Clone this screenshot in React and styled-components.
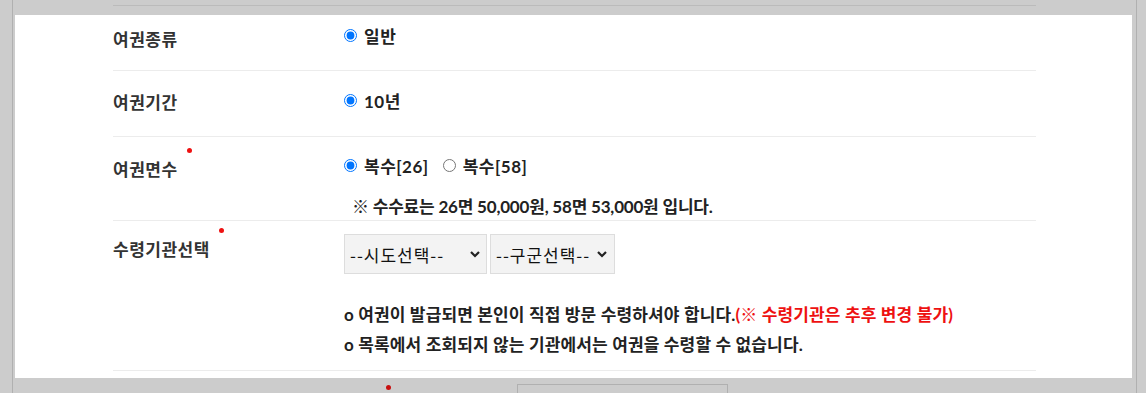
import styled, { createGlobalStyle } from "styled-components";

const GlobalStyle = createGlobalStyle`
  html, body {
    margin: 0;
    padding: 0;
    background: #cccccc;
    overflow: hidden;
  }
`;

const Screen = styled.div`
  width: 1146px;
  height: 393px;
  overflow: hidden;
  background: #cccccc;
  font-family: Lato, "Noto Sans CJK KR", sans-serif;
`;

const Frame = styled.div`
  margin-left: 12px;
  width: 1123px;
  height: 393px;
  border-left: 1px solid #b0b0b0;
  border-right: 1px solid #b0b0b0;
  display: flex;
  flex-direction: column;
`;

const DimTop = styled.div`
  flex: none;
  height: 15px;
  padding-left: 100px;
  box-sizing: border-box;
  padding-top: 5px;
`;

const DimLine = styled.div`
  width: 923px;
  height: 1px;
  background: #bbbbbb;
`;

const Panel = styled.div`
  flex: none;
  margin: 0 4px 0 2px;
  height: 363px;
  background: #ffffff;
  padding-left: 98px;
`;

const Row = styled.div`
  width: 923px;
  display: flex;
  border-bottom: 1px solid #ececec;
`;

const Label = styled.div`
  width: 231px;
  flex: none;
  padding-top: ${(p) => p.$top}px;
  font-size: 17px;
  font-weight: 700;
  line-height: 24px;
  letter-spacing: 0.5px;
  color: #333333;
`;

const LabelText = styled.span`
  position: relative;
  display: inline-block;

  ${(p) =>
    p.$required &&
    `
    &::after {
      content: "";
      position: absolute;
      top: -10px;
      right: -14px;
      width: 5px;
      height: 5px;
      border-radius: 50%;
      background: #ee1111;
    }
  `}
`;

const Value = styled.div`
  flex: 1;
  padding-top: ${(p) => p.$top}px;
  padding-bottom: ${(p) => p.$bottom}px;
  color: #222222;
`;

const RadioGroup = styled.div`
  display: flex;
  align-items: center;
  height: 22px;
  font-size: 17px;
  font-weight: 700;
  letter-spacing: 0.5px;
`;

const RadioLabel = styled.label`
  display: inline-flex;
  align-items: center;
  margin-right: 14px;

  input {
    width: 13px;
    height: 13px;
    margin: 0 7px 0 0;
  }
`;

const Note = styled.p`
  margin: 20px 0 0 8px;
  font-size: 17px;
  font-weight: 700;
  line-height: 22px;
  letter-spacing: -0.2px;
`;

const Selects = styled.div`
  display: flex;
  gap: 3px;
`;

const SelectWrap = styled.div`
  position: relative;
  width: ${(p) => p.$w}px;
  height: 40px;
`;

const Select = styled.select`
  appearance: none;
  width: 100%;
  height: 100%;
  border: 1px solid #dddddd;
  background: #f3f3f3;
  padding: 0 0 0 5px;
  font-family: "Noto Sans CJK KR", sans-serif;
  font-size: 17px;
  letter-spacing: 1px;
  color: #111111;
  outline: none;
`;

const Chevron = styled.svg`
  position: absolute;
  right: ${(p) => p.$right}px;
  top: 17px;
  pointer-events: none;
`;

const Guide = styled.ul`
  list-style: none;
  margin: 26px 0 0;
  padding: 0;
  font-size: 17px;
  font-weight: 700;
  line-height: 30px;
  letter-spacing: 0.15px;
  color: #222222;
`;

const Warn = styled.span`
  color: #ee1111;
`;

const DimBottom = styled.div`
  flex: 1;
  min-height: 0;
  overflow: hidden;
  display: flex;
  align-items: flex-start;
  padding-left: 373px;
`;

const DimDot = styled.div`
  flex: none;
  margin-top: 7px;
  width: 5px;
  height: 5px;
  border-radius: 50%;
  background: #c81010;
`;

const DimBox = styled.div`
  flex: none;
  margin: 6px 0 0 126px;
  width: 209px;
  height: 20px;
  border: 1px solid #b0b0b0;
  border-bottom: none;
`;

const Down = ({ right }) => (
  <Chevron $right={right} width="10" height="7" viewBox="0 0 10 7">
    <polyline points="1,1 5,5 9,1" fill="none" stroke="#222" strokeWidth="2.2" />
  </Chevron>
);

export default function App() {
  return (
    <Screen>
      <GlobalStyle />
      <Frame>
        <DimTop>
          <DimLine />
        </DimTop>
        <Panel>
          <Row>
            <Label $top={13}>
              <LabelText>여권종류</LabelText>
            </Label>
            <Value $top={9} $bottom={24}>
              <RadioGroup>
                <RadioLabel>
                  <input type="radio" name="kind" defaultChecked />
                  일반
                </RadioLabel>
              </RadioGroup>
            </Value>
          </Row>
          <Row>
            <Label $top={20}>
              <LabelText>여권기간</LabelText>
            </Label>
            <Value $top={18} $bottom={25}>
              <RadioGroup>
                <RadioLabel>
                  <input type="radio" name="period" defaultChecked />
                  10년
                </RadioLabel>
              </RadioGroup>
            </Value>
          </Row>
          <Row>
            <Label $top={21}>
              <LabelText $required>여권면수</LabelText>
            </Label>
            <Value $top={17} $bottom={2}>
              <RadioGroup>
                <RadioLabel>
                  <input type="radio" name="pages" defaultChecked />
                  복수[26]
                </RadioLabel>
                <RadioLabel>
                  <input type="radio" name="pages" />
                  복수[58]
                </RadioLabel>
              </RadioGroup>
              <Note>※ 수수료는 26면 50,000원, 58면 53,000원 입니다.</Note>
            </Value>
          </Row>
          <Row>
            <Label $top={17}>
              <LabelText $required>수령기관선택</LabelText>
            </Label>
            <Value $top={13} $bottom={10}>
              <Selects>
                <SelectWrap $w={143}>
                  <Select defaultValue="">
                    <option value="">--시도선택--</option>
                  </Select>
                  <Down right={7} />
                </SelectWrap>
                <SelectWrap $w={125}>
                  <Select defaultValue="">
                    <option value="">--구군선택--</option>
                  </Select>
                  <Down right={8} />
                </SelectWrap>
              </Selects>
              <Guide>
                <li>
                  o 여권이 발급되면 본인이 직접 방문 수령하셔야 합니다.
                  <Warn>(※ 수령기관은 추후 변경 불가)</Warn>
                </li>
                <li>o 목록에서 조회되지 않는 기관에서는 여권을 수령할 수 없습니다.</li>
              </Guide>
            </Value>
          </Row>
        </Panel>
        <DimBottom>
          <DimDot />
          <DimBox />
        </DimBottom>
      </Frame>
    </Screen>
  );
}
